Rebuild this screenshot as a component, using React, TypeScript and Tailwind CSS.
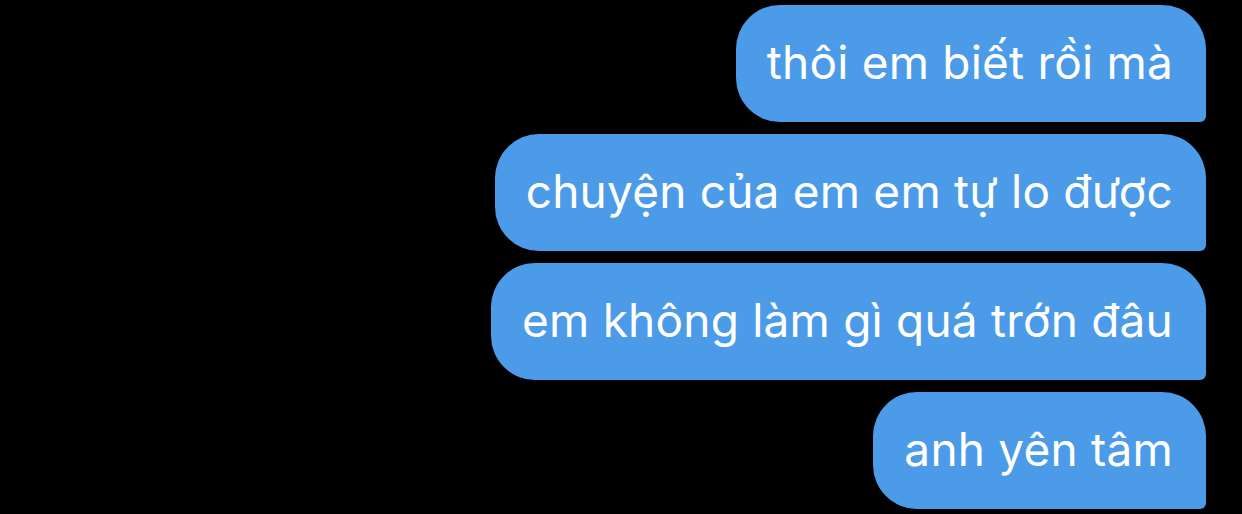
const messages = [
  'thôi em biết rồi mà',
  'chuyện của em em tự lo được',
  'em không làm gì quá trớn đâu',
  'anh yên tâm',
];

function Bubble({ text }: { text: string }) {
  return (
    <div className="flex h-[117px] items-center rounded-[44px] rounded-br-[6px] bg-[#4c9be8] pl-[31px] pr-[33px] pb-[3px] text-[46px] leading-none text-white tracking-[0.2px]">
      {text}
    </div>
  );
}

export default function App() {
  return (
    <div
      className="flex h-[514px] w-[1242px] flex-col items-end gap-[12px] bg-black pr-[36px] pt-[5px]"
      style={{ fontFamily: 'Inter, "Noto Sans", sans-serif' }}
    >
      {messages.map((m) => (
        <Bubble key={m} text={m} />
      ))}
    </div>
  );
}
